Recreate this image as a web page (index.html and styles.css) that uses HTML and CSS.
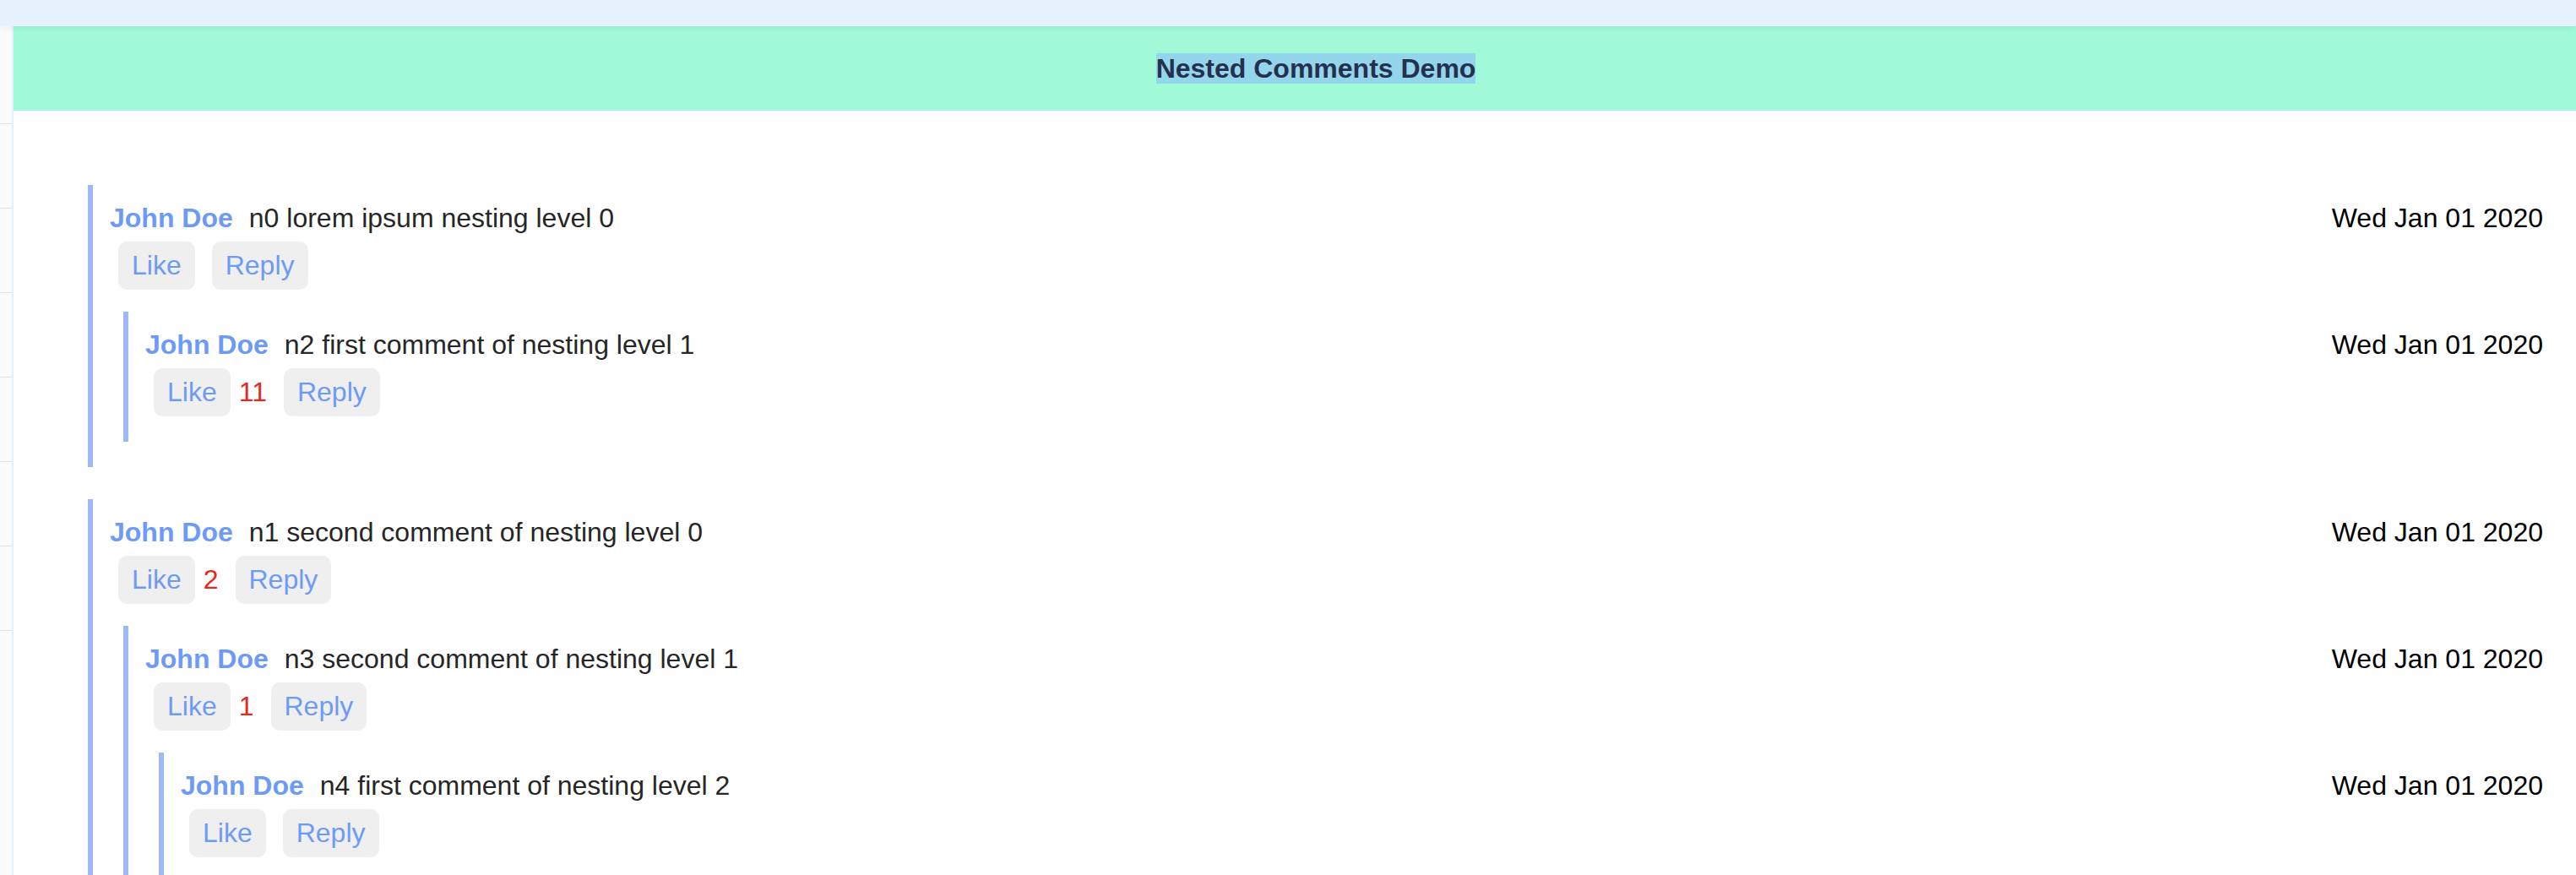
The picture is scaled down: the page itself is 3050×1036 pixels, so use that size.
FILE: index.html
```html
<!DOCTYPE html>
<html lang="en">
<head>
<meta charset="utf-8">
<title>Nested Comments Demo</title>
<link rel="stylesheet" href="styles.css">
</head>
<body>
<div class="topbar"></div>
<div class="main">
  <aside class="sidebar">
    <div class="side-item"></div>
    <div class="side-item"></div>
    <div class="side-item"></div>
    <div class="side-item"></div>
    <div class="side-item"></div>
    <div class="side-item"></div>
    <div class="side-item"></div>
  </aside>
  <div class="content">
    <header class="header"><h1 class="title"><span class="title-text">Nested Comments Demo</span></h1></header>
    <section class="comments">
      <div class="comment">
        <div class="comment-head">
          <div class="comment-body"><span class="author">John Doe</span><span class="text">n0 lorem ipsum nesting level 0</span></div>
          <span class="date">Wed Jan 01 2020</span>
        </div>
        <div class="actions"><button class="btn">Like</button><button class="btn">Reply</button></div>
        <div class="replies">
          <div class="comment">
            <div class="comment-head">
              <div class="comment-body"><span class="author">John Doe</span><span class="text">n2 first comment of nesting level 1</span></div>
              <span class="date">Wed Jan 01 2020</span>
            </div>
            <div class="actions"><button class="btn">Like</button><span class="count">11</span><button class="btn">Reply</button></div>
          </div>
        </div>
      </div>
      <div class="comment">
        <div class="comment-head">
          <div class="comment-body"><span class="author">John Doe</span><span class="text">n1 second comment of nesting level 0</span></div>
          <span class="date">Wed Jan 01 2020</span>
        </div>
        <div class="actions"><button class="btn">Like</button><span class="count">2</span><button class="btn">Reply</button></div>
        <div class="replies">
          <div class="comment">
            <div class="comment-head">
              <div class="comment-body"><span class="author">John Doe</span><span class="text">n3 second comment of nesting level 1</span></div>
              <span class="date">Wed Jan 01 2020</span>
            </div>
            <div class="actions"><button class="btn">Like</button><span class="count">1</span><button class="btn">Reply</button></div>
            <div class="replies">
              <div class="comment">
                <div class="comment-head">
                  <div class="comment-body"><span class="author">John Doe</span><span class="text">n4 first comment of nesting level 2</span></div>
                  <span class="date">Wed Jan 01 2020</span>
                </div>
                <div class="actions"><button class="btn">Like</button><button class="btn">Reply</button></div>
              </div>
            </div>
          </div>
        </div>
      </div>
    </section>
  </div>
</div>
</body>
</html>
```

FILE: styles.css
```css
html, body {
  margin: 0;
  padding: 0;
  background: #ffffff;
  font-family: "Liberation Sans", Arial, Helvetica, sans-serif;
}

.topbar {
  position: relative;
  z-index: 2;
  height: 31px;
  background: #e7f1fd;
  box-shadow: 0 2px 10px rgba(0, 0, 0, 0.07);
}

.main {
  display: flex;
  min-height: 1005px;
}

.sidebar {
  width: 14px;
  flex: 0 0 14px;
  background: #fbfbfb;
  border-right: 2px solid #e5f0fa;
  padding-top: 16px;
}

.side-item {
  height: 99px;
  border-bottom: 1px solid #e2e2e2;
}

.content {
  flex: 1;
  min-width: 0;
}

.header {
  height: 100px;
  background: #a0fad8;
  display: flex;
  align-items: center;
  justify-content: center;
  padding-left: 50px;
}

.title {
  margin: 0;
  font-size: 32px;
  line-height: 36px;
  font-weight: bold;
  color: #25304f;
}

.title-text {
  background: #93d5ea;
}

.comments {
  padding: 88px 39px 0 88px;
}

.comment {
  border-left: 6px solid #9fb8f8;
  padding: 21px 0 30px 20px;
}

.comments > .comment + .comment {
  margin-top: 38px;
}

.comment-head {
  display: flex;
  justify-content: space-between;
  align-items: baseline;
  font-size: 32px;
  line-height: 37px;
}

.author {
  font-weight: bold;
  color: #6e9af7;
  margin-right: 19px;
}

.text {
  color: #262626;
}

.date {
  color: #000000;
}

.actions {
  display: flex;
  align-items: center;
  margin-top: 9px;
}

.btn {
  font-family: inherit;
  font-size: 32px;
  line-height: 37px;
  color: #6e9af7;
  background: #efefef;
  border: none;
  border-radius: 10px;
  padding: 10px 16px;
  margin: 0 10px;
}

.count {
  font-size: 32px;
  line-height: 37px;
  color: #e8281f;
  margin-right: 10px;
}

.replies {
  margin: 26px 0 0 16px;
}
```
